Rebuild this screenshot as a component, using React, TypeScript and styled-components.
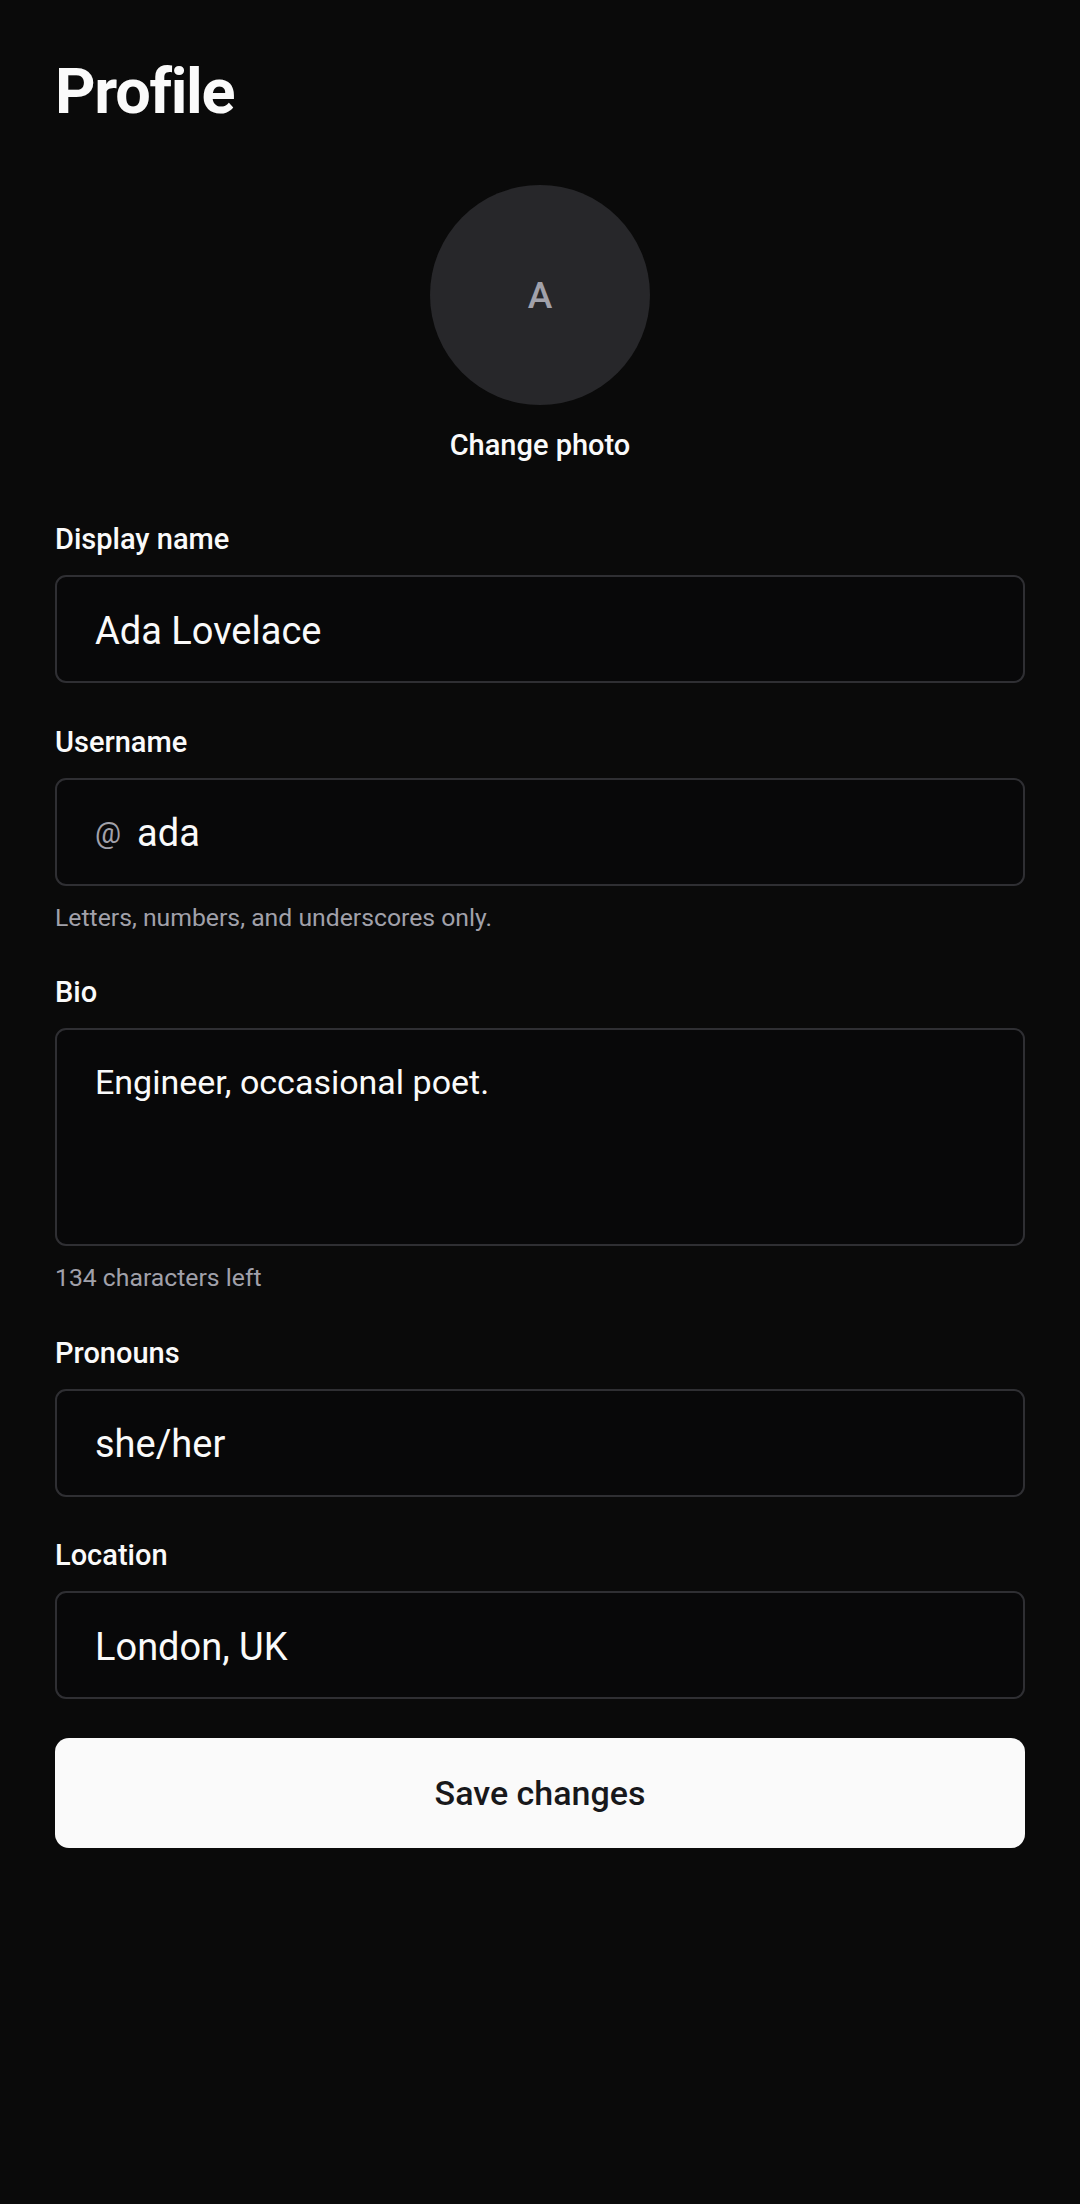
import React from "react";
import styled, { createGlobalStyle } from "styled-components";

const GlobalStyle = createGlobalStyle`
  html, body {
    margin: 0;
    padding: 0;
    background: #0a0a0a;
  }

  body {
    min-height: 100vh;
    font-family: Roboto, "Noto Sans", "Liberation Sans", sans-serif;
    color: #fafafa;
  }

  * {
    box-sizing: border-box;
  }
`;

const Page = styled.div`
  display: flex;
  flex-direction: column;
  min-height: 2204px;
  padding: 54px 55px;
  background: #0a0a0a;
`;

const Title = styled.h1`
  margin: 0;
  font-size: 63px;
  line-height: 75px;
  font-weight: 700;
  letter-spacing: -1.3px;
  color: #fafafa;
`;

const AvatarBlock = styled.div`
  display: flex;
  flex-direction: column;
  align-items: center;
  gap: 20px;
  margin-top: 56px;
`;

const Avatar = styled.div`
  width: 220px;
  height: 220px;
  border-radius: 50%;
  background: #27272a;
  display: flex;
  align-items: center;
  justify-content: center;
  font-size: 37px;
  font-weight: 500;
  color: #a1a1aa;
`;

const ChangePhoto = styled.button`
  border: none;
  background: none;
  padding: 0;
  font-family: inherit;
  font-size: 29px;
  line-height: 40px;
  font-weight: 500;
  color: #fafafa;
  cursor: pointer;
`;

const Form = styled.form`
  display: flex;
  flex-direction: column;
  gap: 38.5px;
  margin-top: 54px;
`;

const Field = styled.div`
  display: flex;
  flex-direction: column;
  gap: 16px;
`;

const Label = styled.label`
  font-size: 29px;
  line-height: 40px;
  font-weight: 500;
  color: #fafafa;
`;

const InputBox = styled.div`
  display: flex;
  align-items: center;
  gap: 16px;
  height: 108px;
  padding: 3px 38px 0;
  border: 2px solid #2f2f33;
  border-radius: 11px;
  background: #080809;
`;

const Prefix = styled.span`
  font-size: 29px;
  line-height: 40px;
  color: #a1a1aa;
`;

const TextInput = styled.input`
  flex: 1;
  min-width: 0;
  border: none;
  outline: none;
  background: transparent;
  padding: 0;
  font-family: inherit;
  font-size: 38px;
  line-height: 50px;
  color: #fafafa;
`;

const TextArea = styled.textarea`
  height: 218px;
  padding: 27px 38px;
  border: 2px solid #2f2f33;
  border-radius: 11px;
  background: #080809;
  outline: none;
  resize: none;
  font-family: inherit;
  font-size: 34px;
  line-height: 1.5;
  color: #fafafa;
`;

const Helper = styled.div`
  font-size: 24.75px;
  line-height: 32px;
  color: #a1a1aa;
`;

const SaveButton = styled.button`
  height: 110px;
  border: none;
  border-radius: 14px;
  background: #fafafa;
  font-family: inherit;
  font-size: 34px;
  font-weight: 500;
  color: #18181b;
  cursor: pointer;
`;

const fields = [
  { id: "pronouns", label: "Pronouns", value: "she/her" },
  { id: "location", label: "Location", value: "London, UK" },
];

const App = () => {
  return (
    <>
      <GlobalStyle />
      <Page>
        <Title>Profile</Title>
        <AvatarBlock>
          <Avatar>A</Avatar>
          <ChangePhoto type="button">Change photo</ChangePhoto>
        </AvatarBlock>
        <Form onSubmit={(e) => e.preventDefault()}>
          <Field>
            <Label htmlFor="display-name">Display name</Label>
            <InputBox>
              <TextInput id="display-name" defaultValue="Ada Lovelace" />
            </InputBox>
          </Field>
          <Field>
            <Label htmlFor="username">Username</Label>
            <InputBox>
              <Prefix>@</Prefix>
              <TextInput id="username" defaultValue="ada" />
            </InputBox>
            <Helper>Letters, numbers, and underscores only.</Helper>
          </Field>
          <Field>
            <Label htmlFor="bio">Bio</Label>
            <TextArea id="bio" defaultValue="Engineer, occasional poet." />
            <Helper>134 characters left</Helper>
          </Field>
          {fields.map((f) => (
            <Field key={f.id}>
              <Label htmlFor={f.id}>{f.label}</Label>
              <InputBox>
                <TextInput id={f.id} defaultValue={f.value} />
              </InputBox>
            </Field>
          ))}
          <SaveButton type="submit">Save changes</SaveButton>
        </Form>
      </Page>
    </>
  );
};

export default App;
